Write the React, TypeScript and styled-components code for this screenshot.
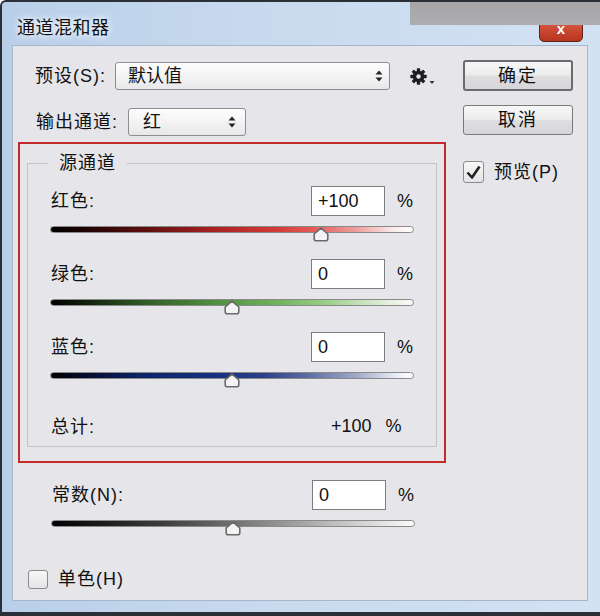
import React from "react";
import styled, { createGlobalStyle } from "styled-components";

const GlobalStyle = createGlobalStyle`
  html, body { margin: 0; padding: 0; background: #ffffff; }
  body { font-family: "Liberation Sans", "Noto Sans CJK SC", sans-serif; }
`;

const PANEL = "#e6e6ea";

const Window = styled.div`
  position: relative;
  width: 600px;
  height: 616px;
  box-sizing: border-box;
  border-left: 2px solid #2b2f36;
  border-top: 2px solid #2b2f36;
  border-bottom: 4px solid #2b2f36;
  border-top-left-radius: 6px;
  background: linear-gradient(90deg, #b9cfe9 0%, #c8daee 45%, #d3e2f3 100%);
  display: flex;
  flex-direction: column;
  overflow: hidden;
  color: #111111;
  font-size: 18px;
`;

const TitleBar = styled.div`
  height: 43px;
  flex: none;
  padding: 14px 0 0 15px;
  box-sizing: border-box;
  line-height: 24px;
  font-size: 18px;
  letter-spacing: 0.5px;
  text-shadow: 0 0 6px rgba(255, 255, 255, 0.95), 0 0 10px rgba(255, 255, 255, 0.8);
`;

const Backdrop = styled.div`
  position: absolute;
  top: -2px;
  right: 0;
  width: 190px;
  height: 25px;
  background: linear-gradient(180deg, #a5a5a7, #adadb0);
  z-index: 2;
`;

const CloseButton = styled.div`
  position: absolute;
  top: 12px;
  right: 17px;
  width: 44px;
  height: 28px;
  box-sizing: border-box;
  border: 1px solid #5e2219;
  border-radius: 0 0 5px 5px;
  background: linear-gradient(180deg, #e58f7c 0%, #d0503a 45%, #b8341f 100%);
  color: #fff;
  font-weight: bold;
  font-size: 15px;
  display: flex;
  align-items: center;
  justify-content: center;
  z-index: 1;
`;

const Panel = styled.div`
  flex: none;
  height: 556px;
  margin: 0 12px 0 10px;
  box-sizing: border-box;
  border: 1px solid #a7b7cb;
  background: ${PANEL};
  display: flex;
  align-items: flex-start;
`;

const MainColumn = styled.div`
  margin-left: 5px;
  width: 428px;
  display: flex;
  flex-direction: column;
`;

const SideColumn = styled.div`
  margin-left: 17px;
  width: 110px;
  padding-top: 14px;
  display: flex;
  flex-direction: column;
`;

const FormRow = styled.div<{ $top: number; $indent: number }>`
  display: flex;
  align-items: center;
  margin-top: ${(p) => p.$top}px;
  padding-left: ${(p) => p.$indent}px;
`;

const FieldLabel = styled.span<{ $width: number }>`
  width: ${(p) => p.$width}px;
  flex: none;
  letter-spacing: 1px;
  line-height: 24px;
`;

const Select = styled.div<{ $width: number; $pad: number; $arrowPad: number }>`
  width: ${(p) => p.$width}px;
  height: 28px;
  box-sizing: border-box;
  border: 1px solid #8d8d8f;
  border-radius: 3px;
  background: linear-gradient(180deg, #fdfdfd 0%, #f3f3f3 50%, #e8e8ea 100%);
  display: flex;
  align-items: center;
  justify-content: space-between;
  padding: 0 ${(p) => p.$arrowPad}px 0 ${(p) => p.$pad}px;
  line-height: 24px;
`;

const GearWrap = styled.div`
  margin-left: 20px;
  display: flex;
  align-items: flex-end;
  gap: 2px;
`;

const RedFrame = styled.div`
  margin-top: 6px;
  width: 428px;
  height: 321px;
  box-sizing: border-box;
  border: 2px solid #c42b2b;
  padding: 8px 7px 0 7px;
`;

const GroupBox = styled.fieldset`
  margin: 0;
  padding: 0;
  height: 295px;
  box-sizing: border-box;
  border: 1px solid #c4c4c8;
  min-inline-size: 0;
`;

const GroupTitle = styled.legend`
  margin-left: 20px;
  padding: 0 11px;
  line-height: 22px;
  letter-spacing: 1px;
`;

const GroupBody = styled.div`
  padding: 12px 0 0 22px;
  display: flex;
  flex-direction: column;
`;

const SliderBlock = styled.div<{ $top: number }>`
  width: 364px;
  margin-top: ${(p) => p.$top}px;
  display: flex;
  flex-direction: column;
`;

const ValueRow = styled.div`
  height: 30px;
  display: flex;
  align-items: center;
  padding-left: 1px;
`;

const ValueBox = styled.div`
  width: 74px;
  height: 30px;
  box-sizing: border-box;
  border: 1px solid #7d7d80;
  background: #fff;
  padding-left: 6px;
  display: flex;
  align-items: center;
  line-height: 24px;
`;

const Percent = styled.span<{ $gap: number }>`
  margin-left: ${(p) => p.$gap}px;
  width: 17px;
  line-height: 24px;
`;

const Track = styled.div<{ $fill: string }>`
  position: relative;
  margin-top: 10px;
  height: 7px;
  box-sizing: border-box;
  border: 1px solid #8a8a8c;
  border-radius: 4px;
  background: ${(p) => p.$fill};
`;

const ThumbMark = styled.svg`
  position: absolute;
  top: 0px;
  transform: translateX(-50%);
`;

const TotalRow = styled.div`
  margin-top: 36px;
  width: 364px;
  height: 23px;
  display: flex;
  align-items: center;
  line-height: 23px;
  padding-left: 1px;
  box-sizing: border-box;
`;

const TotalValue = styled.span`
  margin-right: 14px;
`;

const ConstBlock = styled.div`
  padding-left: 33px;
  margin-top: 17px;
`;

const CheckRow = styled.label<{ $top: number; $indent: number }>`
  display: flex;
  align-items: center;
  margin-top: ${(p) => p.$top}px;
  padding-left: ${(p) => p.$indent}px;
  line-height: 24px;
  letter-spacing: 1px;
`;

const CheckBox = styled.div<{ $w: number; $h: number }>`
  width: ${(p) => p.$w}px;
  height: ${(p) => p.$h}px;
  box-sizing: border-box;
  border: 1px solid #8a8a8e;
  border-radius: 3px;
  background: linear-gradient(180deg, #f8f8f8, #e4e4e6);
  margin-right: 10px;
  display: flex;
  align-items: center;
  justify-content: center;
`;

const PushButton = styled.div<{ $primary?: boolean; $h: number; $gap: number }>`
  height: ${(p) => p.$h}px;
  margin-bottom: ${(p) => p.$gap}px;
  box-sizing: border-box;
  border: ${(p) => (p.$primary ? "2px solid #6c6c6e" : "1px solid #7a7a7c")};
  border-radius: 3px;
  background: linear-gradient(180deg, #f7f7f7 0%, #ececec 48%, #dedee0 52%, #d6d6d8 100%);
  display: flex;
  align-items: center;
  justify-content: center;
  letter-spacing: 2px;
  line-height: 24px;
`;

const Spinner = () => (
  <svg width="8" height="12" viewBox="0 0 8 12">
    <path d="M4 0.5 L7.5 4.5 H0.5 Z M4 11.5 L7.5 7.5 H0.5 Z" fill="#222" />
  </svg>
);

const Gear = () => (
  <GearWrap>
    <svg width="17" height="17" viewBox="0 0 16 16">
      <g fill="#1e1e1e">
        {[0, 45, 90, 135].map((a) => (
          <rect key={a} x="6.4" y="0.3" width="3.2" height="15.4" rx="0.6" transform={`rotate(${a} 8 8)`} />
        ))}
        <circle cx="8" cy="8" r="5.4" />
      </g>
      <circle cx="8" cy="8" r="2.1" fill={PANEL} />
    </svg>
    <svg width="6" height="5" viewBox="0 0 6 5">
      <path d="M0.5 1 H5.5 L3 4 Z" fill="#333" />
    </svg>
  </GearWrap>
);

const Thumb = ({ pos }: { pos: number }) => (
  <ThumbMark width="18" height="15" viewBox="0 0 18 15" style={{ left: `${pos}%` }}>
    <path d="M9 1.2 L15.8 7 L15.8 11.8 Q15.8 13.8 13.8 13.8 L4.2 13.8 Q2.2 13.8 2.2 11.8 L2.2 7 Z" fill="#f3f3f3" stroke="#6b6b6d" strokeWidth="1.6" strokeLinejoin="round" />
  </ThumbMark>
);

const Tick = () => (
  <svg width="17" height="17" viewBox="0 0 17 17">
    <polyline points="2.5,8.5 7,13.5 14.5,2.5" fill="none" stroke="#222" strokeWidth="2.6" strokeLinejoin="round" />
  </svg>
);

const channels = [
  {
    label: "红色:",
    value: "+100",
    pos: 74.7,
    fill: "linear-gradient(90deg, #000 0%, #1a0202 8%, #5a0d0d 25%, #a82222 45%, #d23a36 62%, #e25a56 72%, #efa3a2 85%, #fbeeee 95%, #fff 100%)",
  },
  {
    label: "绿色:",
    value: "0",
    pos: 50,
    fill: "linear-gradient(90deg, #000 0%, #0e1a0a 8%, #2f5a25 25%, #4f8f3e 45%, #6fb25a 62%, #97cc83 75%, #cfe6c6 88%, #fafcf9 100%)",
  },
  {
    label: "蓝色:",
    value: "0",
    pos: 50,
    fill: "linear-gradient(90deg, #000 0%, #050a25 8%, #0c2568 25%, #16307f 45%, #2a3f88 58%, #5868a0 70%, #9ea7c7 84%, #eef0f6 96%, #fff 100%)",
  },
];

const constFill =
  "linear-gradient(90deg, #000 0%, #141414 10%, #3c3c3c 30%, #707070 50%, #a2a2a2 68%, #d2d2d2 85%, #fbfbfb 100%)";

const App = () => {
  return (
    <Window>
      <GlobalStyle />
      <Backdrop />
      <CloseButton>x</CloseButton>
      <TitleBar>通道混和器</TitleBar>
      <Panel>
        <MainColumn>
          <FormRow $top={16} $indent={17}>
            <FieldLabel $width={80}>预设(S):</FieldLabel>
            <Select $width={275} $pad={12} $arrowPad={6}>
              <span>默认值</span>
              <Spinner />
            </Select>
            <Gear />
          </FormRow>
          <FormRow $top={18} $indent={18}>
            <FieldLabel $width={92}>输出通道:</FieldLabel>
            <Select $width={118} $pad={14} $arrowPad={9}>
              <span>红</span>
              <Spinner />
            </Select>
          </FormRow>
          <RedFrame>
            <GroupBox>
              <GroupTitle>源通道</GroupTitle>
              <GroupBody>
                {channels.map((c, i) => (
                  <SliderBlock key={c.label} $top={i === 0 ? 0 : 26}>
                    <ValueRow>
                      <FieldLabel $width={260}>{c.label}</FieldLabel>
                      <ValueBox>{c.value}</ValueBox>
                      <Percent $gap={12}>%</Percent>
                    </ValueRow>
                    <Track $fill={c.fill}>
                      <Thumb pos={c.pos} />
                    </Track>
                  </SliderBlock>
                ))}
                <TotalRow>
                  <FieldLabel $width={280}>总计:</FieldLabel>
                  <TotalValue>+100</TotalValue>
                  <span>%</span>
                </TotalRow>
              </GroupBody>
            </GroupBox>
          </RedFrame>
          <ConstBlock>
            <SliderBlock $top={0}>
              <ValueRow>
                <FieldLabel $width={260}>常数(N):</FieldLabel>
                <ValueBox>0</ValueBox>
                <Percent $gap={12}>%</Percent>
              </ValueRow>
              <Track $fill={constFill}>
                <Thumb pos={50} />
              </Track>
            </SliderBlock>
          </ConstBlock>
          <CheckRow $top={40} $indent={10}>
            <CheckBox $w={20} $h={19} />
            单色(H)
          </CheckRow>
        </MainColumn>
        <SideColumn>
          <PushButton $primary $h={31} $gap={14}>确定</PushButton>
          <PushButton $h={30} $gap={25}>取消</PushButton>
          <CheckRow $top={0} $indent={0}>
            <CheckBox $w={21} $h={22}>
              <Tick />
            </CheckBox>
            预览(P)
          </CheckRow>
        </SideColumn>
      </Panel>
    </Window>
  );
};

export default App;
